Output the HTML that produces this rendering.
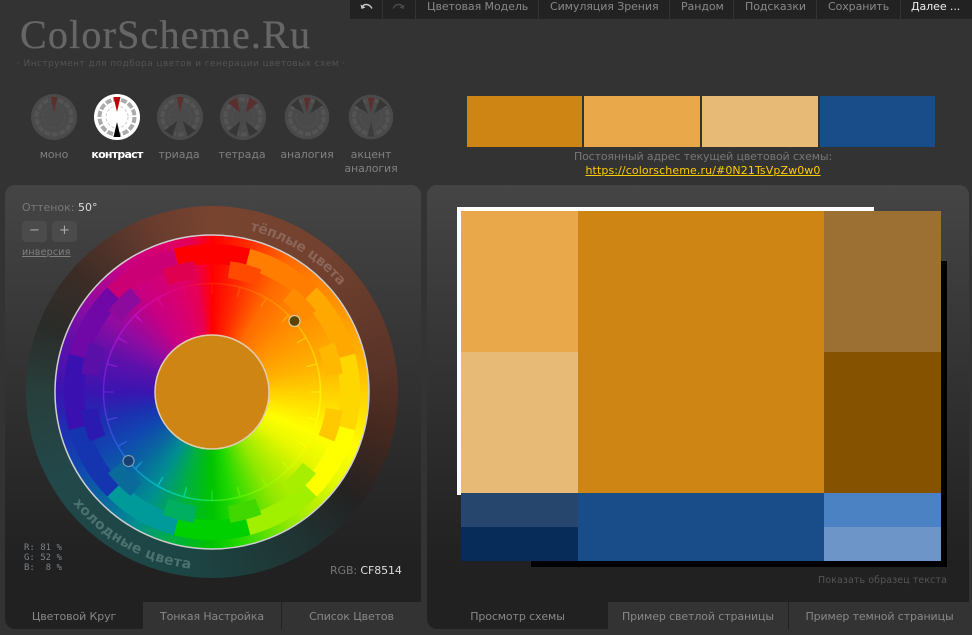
<!DOCTYPE html>
<html><head><meta charset="utf-8"><title>ColorScheme.Ru</title>
<style>
html,body{margin:0;padding:0;width:972px;height:635px;overflow:hidden;background:#333;font-family:"DejaVu Sans","Liberation Sans",sans-serif;font-size:11px;color:#888}
.a{position:absolute;white-space:nowrap}
a{color:inherit}
#nav{left:350px;top:0;width:622px;height:19px;background:#222}
#nav i{position:absolute;top:0;width:1px;height:19px;background:#333}
#nav span{position:absolute;top:0;line-height:13px;color:#888;letter-spacing:-.08px}
.lbl{width:64px;text-align:center;top:148px;line-height:14px;color:#808080;letter-spacing:-.1px}
.sw{top:96px;height:51px}
.panel{background:linear-gradient(#454545,#2d2d2d 55%,#212121 85%,#212121);border-radius:10px;top:185px;height:444px}
.tab{top:602px;height:27px;background:#333;text-align:center;line-height:29px;color:#888;letter-spacing:-.12px}
.btn{top:221px;width:25px;height:21px;background:#4b4b4b;border-radius:4px;text-align:center;line-height:20px;color:#aaa;font-size:13px}
.disc{border-radius:50%}
.hi{opacity:.85;background:conic-gradient(#ff2000 0deg,#ff8800 30deg,#ffcc00 60deg,#ffff00 100deg,#ffff00 120deg,#c8ff00 135deg,#50f000 170deg,#00e090 190deg,#00c8c8 210deg,#3060e0 240deg,#7020e0 270deg,#c810c8 315deg,#e80070 345deg,#ff2000 360deg)}
</style></head><body>

<div class="a" style="left:20px;top:12px;font:40px/46px 'Liberation Serif',serif;color:#666;letter-spacing:1.2px;-webkit-text-stroke:.35px #666">ColorScheme.Ru</div>
<div class="a" style="left:17px;top:59px;font-size:9px;line-height:11px;color:#535353;letter-spacing:.42px">· Инструмент для подбора цветов и генерации цветовых схем ·</div>

<div id="nav" class="a">
<i style="left:32px"></i><i style="left:65px"></i><i style="left:188px"></i><i style="left:319px"></i><i style="left:383px"></i><i style="left:466px"></i><i style="left:550px"></i>
<svg style="position:absolute;left:0;top:0" width="65" height="19" fill="none"><path d="M12 8 C13 3.500 19 3 22 8.500" stroke="#c8c8c8" stroke-width="1.400"/><path d="M10.500 4.500 L11.500 9 L15.500 7.500 Z" fill="#c8c8c8"/><path d="M53 8 C52 3.500 46 3 43 8.500" stroke="#4a4a4a" stroke-width="1.400"/><path d="M54.500 4.500 L53.500 9 L49.500 7.500 Z" fill="#4a4a4a"/></svg>
<span style="left:77px">Цветовая Модель</span><span style="left:200px">Симуляция Зрения</span><span style="left:331px">Рандом</span><span style="left:395px">Подсказки</span><span style="left:478px">Сохранить</span><span style="left:561px;color:#eee">Далее ...</span>
</div>

<!-- scheme icons -->
<svg class="a" style="left:0;top:85px" width="420" height="60">
<defs>
<g id="base"><circle r="23" fill="#4a4a4a"/><circle r="17.500" fill="none" stroke="#545454" stroke-width="4" stroke-dasharray="6 1.850"/><circle r="11" fill="none" stroke="#525252" stroke-width="1" stroke-dasharray="3 2"/></g>
<polygon id="w" points="-3.500,-20 3.500,-20 0,-5"/>
<polygon id="wb" points="-5,-20 5,-20 0,-5"/>
</defs>
<g transform="translate(54,32)"><use href="#base"/><use href="#w" fill="#5c2f2f"/></g>
<g transform="translate(117,32)"><circle r="23" fill="#fff"/><circle r="17.500" fill="none" stroke="#aaa" stroke-width="4" stroke-dasharray="6 1.850"/><circle r="11" fill="none" stroke="#ccc" stroke-width="1" stroke-dasharray="3 2"/><use href="#w" fill="#c00000"/><use href="#w" fill="#000" transform="rotate(180)"/></g>
<g transform="translate(180,32)"><use href="#base"/><use href="#w" fill="#5c2f2f"/><use href="#wb" fill="#363636" transform="rotate(145)"/><use href="#wb" fill="#363636" transform="rotate(215)"/></g>
<g transform="translate(243,32)"><use href="#base"/><use href="#wb" fill="#5c2f2f" transform="rotate(32)"/><use href="#wb" fill="#5c2f2f" transform="rotate(-32)"/><use href="#wb" fill="#363636" transform="rotate(148)"/><use href="#wb" fill="#363636" transform="rotate(212)"/></g>
<g transform="translate(307,32) scale(.97)"><use href="#base"/><use href="#w" fill="#5c2f2f"/><use href="#wb" fill="#363636" transform="rotate(40)"/><use href="#wb" fill="#363636" transform="rotate(-40)"/></g>
<g transform="translate(371,32) scale(.97)"><use href="#base"/><use href="#w" fill="#5c2f2f"/><use href="#wb" fill="#363636" transform="rotate(40)"/><use href="#wb" fill="#363636" transform="rotate(-40)"/><use href="#w" fill="#3c3c3c" transform="rotate(180)"/></g>
</svg>
<div class="a lbl" style="left:22px">моно</div>
<div class="a lbl" style="left:85px;color:#fff;font-weight:bold;letter-spacing:-.75px">контраст</div>
<div class="a lbl" style="left:147px">триада</div>
<div class="a lbl" style="left:210px">тетрада</div>
<div class="a lbl" style="left:275px">аналогия</div>
<div class="a lbl" style="left:339px">акцент<br>аналогия</div>

<div class="a sw" style="left:467px;width:115px;background:#CF8514"></div>
<div class="a sw" style="left:584px;width:116px;background:#E9A94B"></div>
<div class="a sw" style="left:702px;width:116px;background:#E7BB76"></div>
<div class="a sw" style="left:820px;width:115px;background:#184D89"></div>
<div class="a" style="left:467px;width:472px;top:150px;text-align:center;line-height:14px;color:#777;letter-spacing:-.15px">Постоянный адрес текущей цветовой схемы:</div>
<div class="a" style="left:467px;width:472px;top:164px;text-align:center;line-height:14px;color:#fc0;letter-spacing:.1px"><a href="#" style="text-decoration:underline">https://colorscheme.ru/#0N21TsVpZw0w0</a></div>

<!-- left panel -->
<div class="a panel" style="left:5px;width:416px"></div>
<div class="a" style="left:22px;top:201px;line-height:14px;color:#777">Оттенок: <span style="color:#ddd">50°</span></div>
<div class="a btn" style="left:22px">−</div>
<div class="a btn" style="left:52px">+</div>
<div class="a" style="left:22px;top:247px;font-size:9.500px;line-height:12px;color:#808080;text-decoration:underline;letter-spacing:.2px">инверсия</div>

<div class="a disc" style="left:26px;top:206px;width:372px;height:372px;background:conic-gradient(#78442f 0deg,#72412f 40deg,#5a3428 80deg,#45281f 103deg,#242222 127deg,#1f3433 150deg,#1c4645 190deg,#22484a 240deg,#283f3c 270deg,#2a2c29 292deg,#3d2c26 312deg,#683c2e 340deg,#78442f 360deg)"></div>
<div class="a disc" style="left:55px;top:235px;width:314px;height:314px;background:conic-gradient(#ff0000 0deg,#ff3000 15deg,#ff6a00 30deg,#ff8c00 50deg,#ffb000 75deg,#ffd000 90deg,#ffff00 112deg,#e8f800 125deg,#90e800 150deg,#20d800 170deg,#00c400 180deg,#00b040 195deg,#008f90 210deg,#0a66a0 225deg,#1048b0 240deg,#1c30b0 255deg,#3a14b0 270deg,#6010aa 290deg,#8f0ca2 305deg,#c80082 325deg,#d80070 340deg,#e60055 352deg,#ff0010 359deg,#ff0000 360deg)"></div>

<svg class="a" style="left:0;top:0" width="972" height="635" fill="none">
<g transform="translate(212,392) rotate(-90)">
<g stroke-width="20">
<circle r="138" pathLength="360" stroke="#ff0000" stroke-dasharray="30 330" stroke-dashoffset="15"/>
<circle r="138" pathLength="360" stroke="#ff7d00" stroke-dasharray="30 330" stroke-dashoffset="-15"/>
<circle r="138" pathLength="360" stroke="#ffa800" stroke-dasharray="30 330" stroke-dashoffset="-45"/>
<circle r="138" pathLength="360" stroke="#ffd700" stroke-dasharray="30 330" stroke-dashoffset="-75"/>
<circle r="138" pathLength="360" stroke="#ffff00" stroke-dasharray="30 330" stroke-dashoffset="-105"/>
<circle r="138" pathLength="360" stroke="#a0f000" stroke-dasharray="30 330" stroke-dashoffset="-135"/>
<circle r="138" pathLength="360" stroke="#00d000" stroke-dasharray="30 330" stroke-dashoffset="-165"/>
<circle r="138" pathLength="360" stroke="#009a9a" stroke-dasharray="30 330" stroke-dashoffset="-195"/>
<circle r="138" pathLength="360" stroke="#1535b0" stroke-dasharray="30 330" stroke-dashoffset="-225"/>
<circle r="138" pathLength="360" stroke="#3a10b0" stroke-dasharray="30 330" stroke-dashoffset="-255"/>
<circle r="138" pathLength="360" stroke="#7008a8" stroke-dasharray="30 330" stroke-dashoffset="-285"/>
<circle r="138" pathLength="360" stroke="#cc0075" stroke-dasharray="30 330" stroke-dashoffset="-315"/>
</g>
<g stroke-width="17">
<circle r="123.500" pathLength="360" stroke="#ff4a00" stroke-dasharray="14 346" stroke-dashoffset="-8"/>
<circle r="123.500" pathLength="360" stroke="#ff8c00" stroke-dasharray="14 346" stroke-dashoffset="-38"/>
<circle r="123.500" pathLength="360" stroke="#ffb800" stroke-dasharray="14 346" stroke-dashoffset="-68"/>
<circle r="123.500" pathLength="360" stroke="#ffc800" stroke-dasharray="14 346" stroke-dashoffset="-98"/>
<circle r="123.500" pathLength="360" stroke="#a8ee00" stroke-dasharray="14 346" stroke-dashoffset="-128"/>
<circle r="123.500" pathLength="360" stroke="#40d800" stroke-dasharray="14 346" stroke-dashoffset="-158"/>
<circle r="123.500" pathLength="360" stroke="#00b060" stroke-dasharray="14 346" stroke-dashoffset="-188"/>
<circle r="123.500" pathLength="360" stroke="#0a6a9a" stroke-dasharray="14 346" stroke-dashoffset="-218"/>
<circle r="123.500" pathLength="360" stroke="#2a1ab0" stroke-dasharray="14 346" stroke-dashoffset="-248"/>
<circle r="123.500" pathLength="360" stroke="#5a10a8" stroke-dasharray="14 346" stroke-dashoffset="-278"/>
<circle r="123.500" pathLength="360" stroke="#8c0a9c" stroke-dasharray="14 346" stroke-dashoffset="-308"/>
<circle r="123.500" pathLength="360" stroke="#e00050" stroke-dasharray="14 346" stroke-dashoffset="-338"/>
</g>
<circle r="157" stroke="#cfcfcf" stroke-width="1.500"/>
</g>
</svg>

<div class="a disc hi" style="left:102px;top:282px;width:220px;height:220px;-webkit-mask-image:radial-gradient(circle,transparent 107.500px,#000 108px,#000 109px,transparent 109.500px);mask-image:radial-gradient(circle,transparent 107.500px,#000 108px,#000 109px,transparent 109.500px)"></div>
<div class="a disc hi" style="left:102px;top:282px;width:220px;height:220px;-webkit-mask-image:radial-gradient(circle,transparent 98px,#000 98.500px,#000 108px,transparent 108.500px),repeating-conic-gradient(from -.4deg,#000 0 .8deg,transparent .8deg 15deg);mask-image:radial-gradient(circle,transparent 98px,#000 98.500px,#000 108px,transparent 108.500px),repeating-conic-gradient(from -.4deg,#000 0 .8deg,transparent .8deg 15deg);-webkit-mask-composite:source-in;mask-composite:intersect"></div>

<svg class="a" style="left:0;top:0" width="972" height="635" fill="none">
<circle cx="212" cy="392" r="57" fill="#CF8514" stroke="#e0cdb0" stroke-width="1.500"/>
<circle cx="294.500" cy="321" r="5.500" fill="#5c4400" stroke="#d8d0a0" stroke-width="1.200"/>
<circle cx="128.500" cy="461" r="5.500" fill="#164070" stroke="#7d9ab0" stroke-width="1.200"/>
<path id="warm" d="M212 226 A166 166 0 0 1 378 392"/>
<path id="cold" d="M34 392 A178 178 0 0 0 212 570"/>
<text font-family="'DejaVu Sans',sans-serif" font-size="14" font-weight="bold" fill="#8a6558"><textPath href="#warm" startOffset="38" textLength="108">тёплые цвета</textPath></text>
<text font-family="'DejaVu Sans',sans-serif" font-size="14" font-weight="bold" fill="#4d716e"><textPath href="#cold" startOffset="120" textLength="138">холодные цвета</textPath></text>
</svg>

<div class="a" style="left:24px;top:543px;font:9px/10px 'DejaVu Sans Mono',monospace;color:#7a8288;white-space:pre">R: 81 %
G: 52 %
B:  8 %</div>
<div class="a" style="left:330px;top:564px;line-height:14px;color:#777;letter-spacing:-.1px">RGB: <span style="color:#ddd">CF8514</span></div>

<div class="a tab" style="left:5px;width:138px;background:none">Цветовой Круг</div>
<div class="a tab" style="left:143px;width:138px">Тонкая Настройка</div>
<div class="a" style="left:281px;top:602px;width:1px;height:27px;background:#222"></div>
<div class="a tab" style="left:282px;width:139px">Список Цветов</div>

<!-- right panel -->
<div class="a panel" style="left:427px;width:542px"></div>
<div class="a" style="left:457px;top:207px;width:417px;height:288px;background:#fff"></div>
<div class="a" style="left:531px;top:261px;width:416px;height:306px;background:#000"></div>
<div class="a" style="left:461px;top:211px;width:117px;height:141px;background:#E9A94B"></div>
<div class="a" style="left:461px;top:352px;width:117px;height:141px;background:#E7BB76"></div>
<div class="a" style="left:578px;top:211px;width:246px;height:282px;background:#CF8514"></div>
<div class="a" style="left:824px;top:211px;width:117px;height:141px;background:#9B7032"></div>
<div class="a" style="left:824px;top:352px;width:117px;height:141px;background:#855300"></div>
<div class="a" style="left:461px;top:493px;width:117px;height:34px;background:#27466D"></div>
<div class="a" style="left:461px;top:527px;width:117px;height:34px;background:#072C5A"></div>
<div class="a" style="left:578px;top:493px;width:246px;height:68px;background:#184D89"></div>
<div class="a" style="left:824px;top:493px;width:117px;height:34px;background:#4A82C3"></div>
<div class="a" style="left:824px;top:527px;width:117px;height:34px;background:#6D95C7"></div>
<div class="a" style="right:25px;top:575px;font-size:9.500px;line-height:12px;color:#555;letter-spacing:.08px">Показать образец текста</div>

<div class="a tab" style="left:427px;width:181px;background:none">Просмотр схемы</div>
<div class="a tab" style="left:608px;width:180px">Пример светлой страницы</div>
<div class="a" style="left:788px;top:602px;width:1px;height:27px;background:#222"></div>
<div class="a tab" style="left:789px;width:181px">Пример темной страницы</div>
</body></html>
